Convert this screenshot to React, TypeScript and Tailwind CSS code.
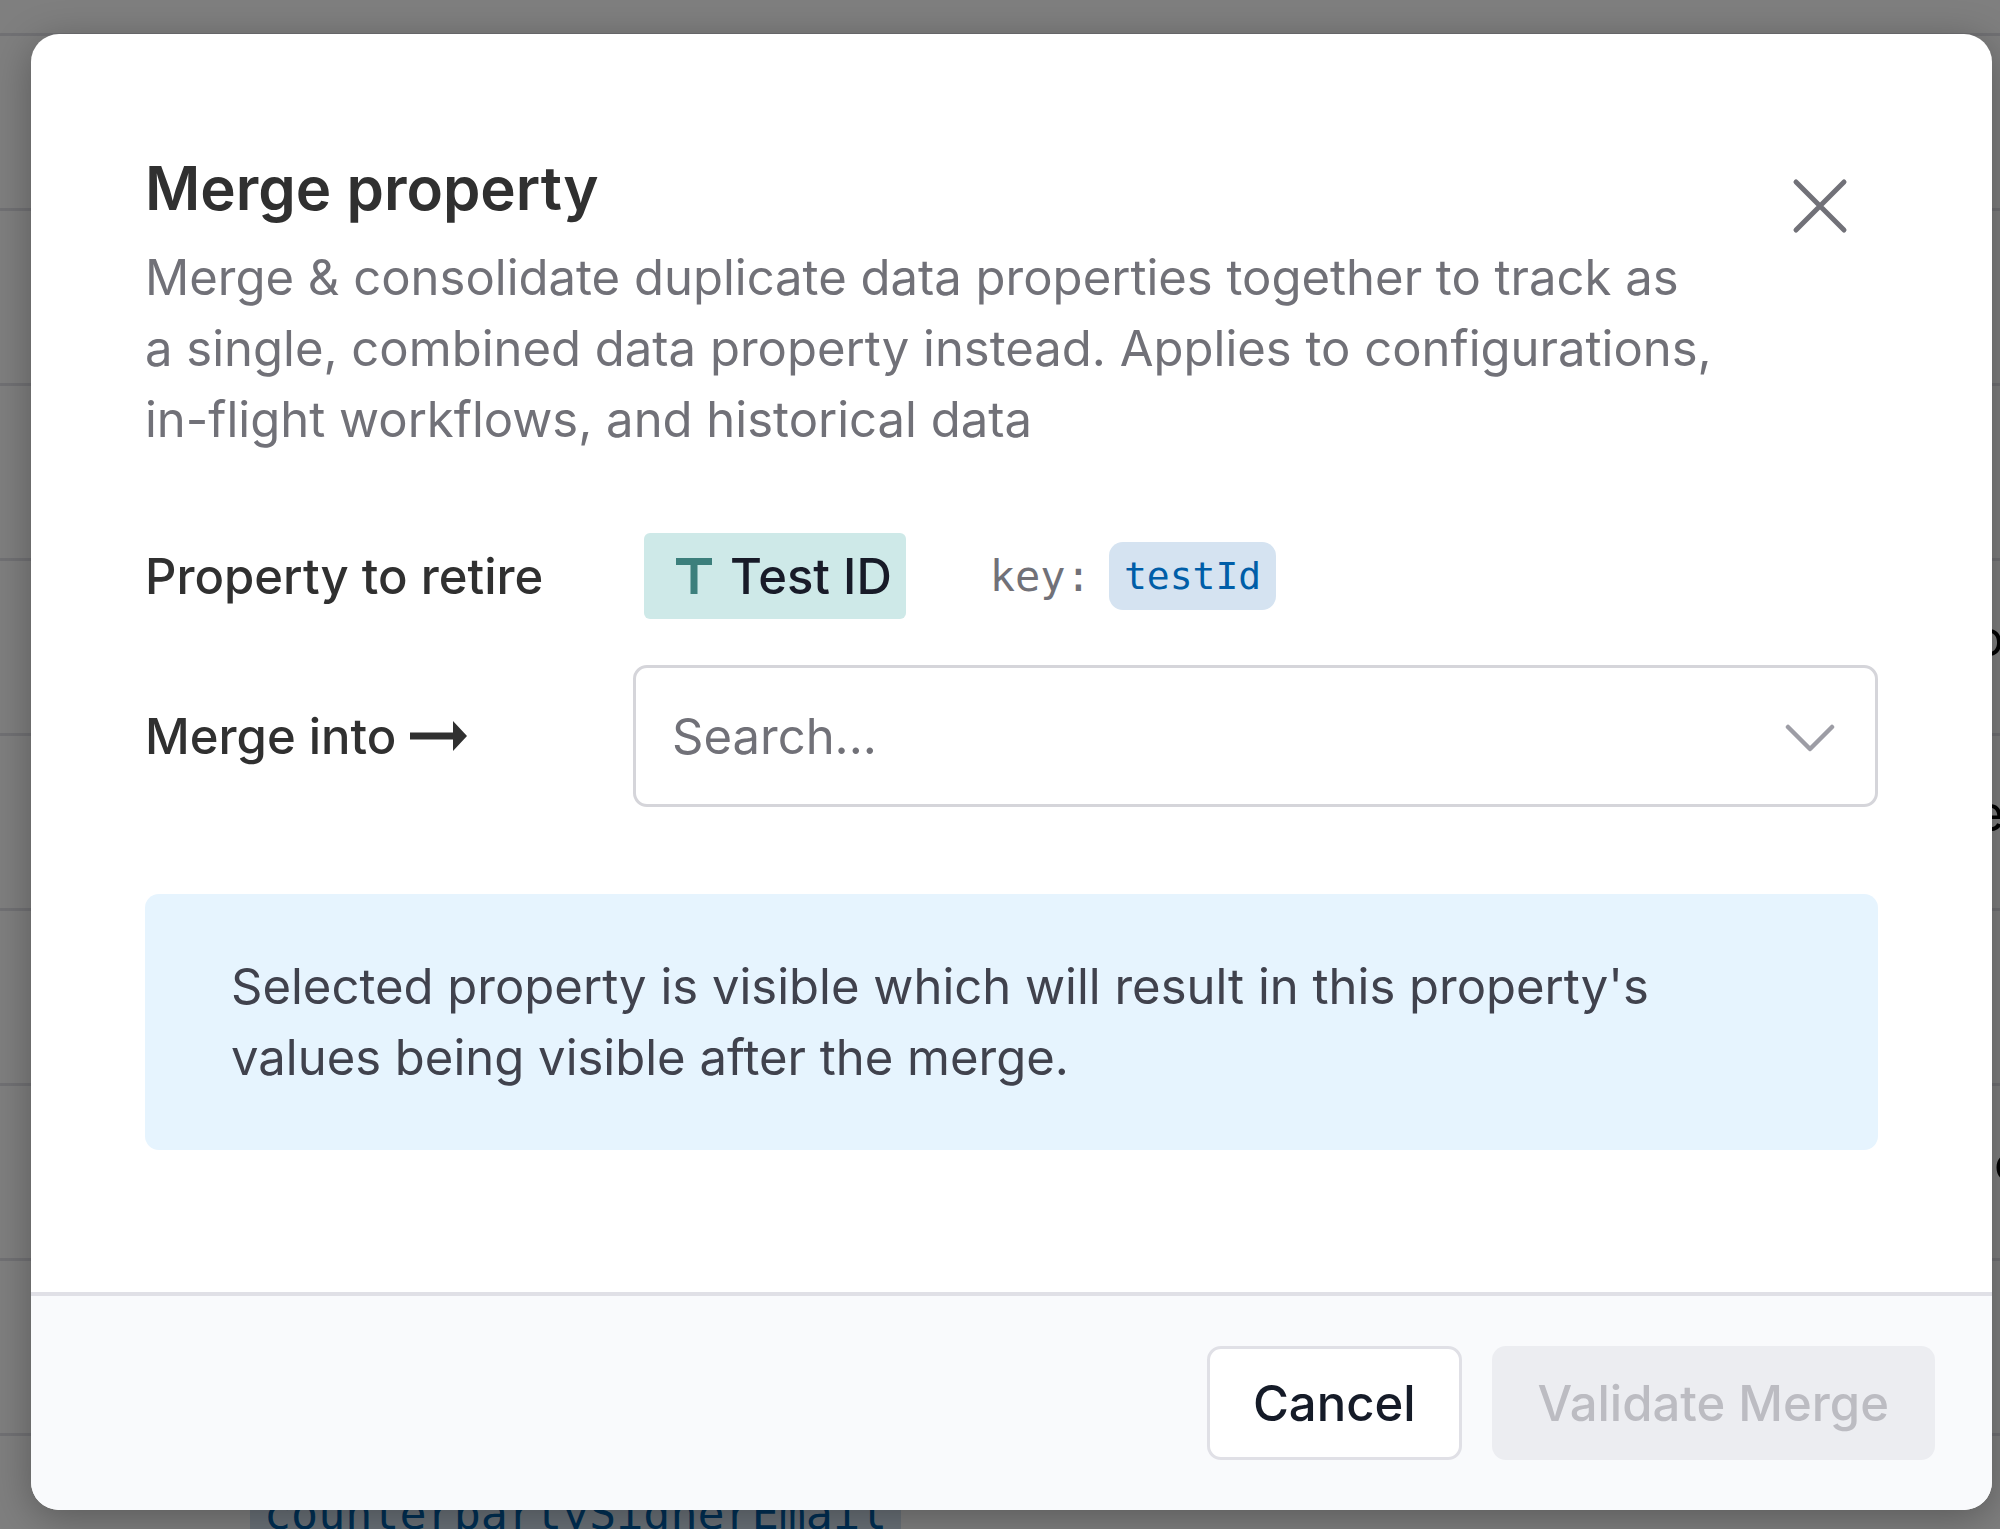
import { useState } from "react";

const ROWS = [
  { id: 1 },
  { id: 2 },
  { id: 3 },
  { id: 4, tail: "o" },
  { id: 5, tail: "e" },
  { id: 6 },
  { id: 7, head: "c" },
  { id: 8 },
  { id: 9, code: "counterpartySignerEmail" },
];

function PropertyList() {
  return (
    <div aria-hidden="true" className="h-full overflow-hidden bg-white pt-[33px]">
      {ROWS.map((row) => (
        <div
          key={row.id}
          className="flex h-[175px] items-center border-t-[3px] border-[#e2e2e8] pb-4 pl-[250px] text-[49px] text-black"
        >
          {row.code && (
            <code className="bg-[#d5e3f1] px-3.5 py-2 font-['DejaVu_Sans_Mono',monospace] text-[45px] leading-[50px] text-[#005ea8]">
              {row.code}
            </code>
          )}
          {row.tail && <span className="-mr-1 ml-auto">{row.tail}</span>}
          {row.head && <span className="ml-auto w-1.5">{row.head}</span>}
        </div>
      ))}
    </div>
  );
}

export default function App() {
  const [search, setSearch] = useState("");

  return (
    <div className="relative h-screen overflow-hidden font-['Inter',sans-serif]">
      <PropertyList />

      {/* Overlay */}
      <div className="absolute inset-0 bg-black/50 pt-[34px] pr-2 pb-[19px] pl-[31px]">
        <div
          role="dialog"
          aria-labelledby="merge-title"
          className="flex h-full flex-col overflow-hidden rounded-[28px] bg-white shadow-[0_8px_40px_rgba(0,0,0,0.3)]"
        >
          <div className="flex-1 px-[114px] pt-[114px]">
            {/* Header */}
            <div className="flex items-start justify-between">
              <div>
                <h1 id="merge-title" className="text-[60px] leading-[80px] font-semibold text-[#303030]">
                  Merge property
                </h1>
                <p className="mt-3.5 max-w-[1570px] text-[49px] leading-[71px] text-[#717178]">
                  Merge & consolidate duplicate data properties together to track as a single, combined
                  data property instead. Applies to configurations, in-flight workflows, and historical
                  data
                </p>
              </div>
              <button type="button" aria-label="Close" className="mt-[30px] mr-[30px] text-[#717178]">
                <svg width="56" height="56" viewBox="0 0 56 56" fill="none" stroke="currentColor" strokeWidth="5" strokeLinecap="round">
                  <path d="M4 4l48 48M52 4L4 52" />
                </svg>
              </button>
            </div>

            {/* Property to retire */}
            <div className="mt-[78px] flex items-center text-[49px] leading-[71px] font-medium text-[#303030]">
              <div className="w-[499px]">Property to retire</div>
              <div className="flex h-[86px] items-center gap-[18px] rounded-md bg-[#cee9e8] pr-3.5 pl-8 text-[#181b28]">
                <svg width="36" height="36" viewBox="0 0 36 36" fill="#3c7f7c">
                  <path d="M0 0h36v7H21.500v29h-7V7H0z" />
                </svg>
                Test ID
              </div>
              <div className="ml-[84px] flex items-center gap-[18px] font-['DejaVu_Sans_Mono',monospace] text-[42px] font-normal text-[#717178]">
                key:
                <code className="rounded-[14px] bg-[#d5e3f1] px-[15px] font-['DejaVu_Sans_Mono',monospace] text-[38px] leading-[68px] text-[#005ea8]">
                  testId
                </code>
              </div>
            </div>

            {/* Merge into */}
            <div className="mt-[46px] flex items-center">
              <label
                htmlFor="merge-into"
                className="flex w-[488px] items-center gap-3.5 text-[49px] leading-[71px] font-medium text-[#303030]"
              >
                Merge into
                <svg width="57" height="30" viewBox="0 0 57 30" fill="currentColor">
                  <path d="M0 11.500H43V0l14 15-14 15V18.500H0z" />
                </svg>
              </label>
              <div className="flex h-[142px] flex-1 items-center rounded-[14px] border-[3px] border-[#d5d5da] pr-10 pl-9">
                <input
                  id="merge-into"
                  type="text"
                  value={search}
                  onChange={(e) => setSearch(e.target.value)}
                  placeholder="Search..."
                  className="min-w-0 flex-1 text-[49px] leading-[71px] text-[#303030] outline-none placeholder:text-[#717178]"
                />
                <svg width="50" height="32" viewBox="0 0 50 32" fill="none" stroke="#9d9da5" strokeWidth="4.500" strokeLinecap="round" strokeLinejoin="round">
                  <path d="M3 7l22 22L47 7" />
                </svg>
              </div>
            </div>

            {/* Notice */}
            <div className="mt-[87px] rounded-[14px] bg-[#e6f4fe] px-[86px] py-[57px] text-[49px] leading-[71px] text-[#40424d]">
              <p className="max-w-[1480px]">
                Selected property is visible which will result in this property's values being visible
                after the merge.
              </p>
            </div>
          </div>

          {/* Footer */}
          <div className="flex items-center justify-end gap-[30px] border-t-4 border-[#e0e0e6] bg-[#f9fafc] py-[50px] pr-[57px] text-[49px] leading-[71px] font-medium">
            <button
              type="button"
              className="h-[114px] rounded-[14px] border-[3px] border-[#e0e0e6] bg-white px-[43px] text-[#151b28]"
            >
              Cancel
            </button>
            <button type="button" disabled className="h-[114px] rounded-[14px] bg-[#ecedf1] px-[46px] text-[#bcbcc2]">
              Validate Merge
            </button>
          </div>
        </div>
      </div>
    </div>
  );
}
